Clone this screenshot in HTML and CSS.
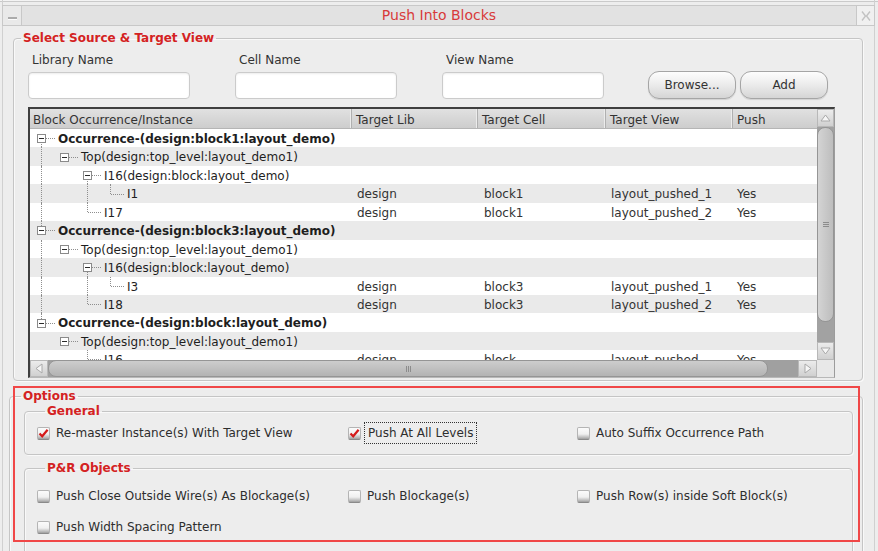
FILE: index.html
```html
<!DOCTYPE html>
<html>
<head>
<meta charset="utf-8">
<title>Push Into Blocks</title>
<link rel="stylesheet" href="styles.css">
</head>
<body>
<div class="window">
  <div class="titlebar">
    <div class="tb-btn tb-min"><span class="dash"></span></div>
    <div class="tb-title">Push Into Blocks</div>
    <div class="tb-btn tb-close">
      <svg width="12" height="12" viewBox="0 0 12 12"><path d="M2 1.5 L5.5 6 L2 10.5 M10 1.5 L6.5 6 L10 10.5" fill="none" stroke="#c2c2c2" stroke-width="1.4"/></svg>
    </div>
  </div>

  <fieldset class="group group-select">
    <legend>Select Source &amp; Target View</legend>
    <div class="fields">
      <div class="field"><label>Library Name</label><div class="input"></div></div>
      <div class="field"><label>Cell Name</label><div class="input"></div></div>
      <div class="field"><label>View Name</label><div class="input"></div></div>
      <button class="btn">Browse...</button>
      <button class="btn">Add</button>
    </div>

    <div class="table">
      <div class="view">
        <div class="thead">
          <div class="hc w1">Block Occurrence/Instance</div>
          <div class="hc w2">Target Lib</div>
          <div class="hc w3">Target Cell</div>
          <div class="hc w4">Target View</div>
          <div class="hc w5 last-h">Push</div>
        </div>
        <div class="tbody">
          <div class="row">
            <div class="c w1 tree"><span class="g box dn"><i></i></span><span class="t b">Occurrence-(design:block1:layout_demo)</span></div>
            <div class="c w2"></div><div class="c w3"></div><div class="c w4"></div><div class="c w5"></div>
          </div>
          <div class="row">
            <div class="c w1 tree"><span class="g pass"></span><span class="g box"><i></i></span><span class="t">Top(design:top_level:layout_demo1)</span></div>
            <div class="c w2"></div><div class="c w3"></div><div class="c w4"></div><div class="c w5"></div>
          </div>
          <div class="row">
            <div class="c w1 tree"><span class="g pass"></span><span class="g"></span><span class="g box dn"><i></i></span><span class="t">I16(design:block:layout_demo)</span></div>
            <div class="c w2"></div><div class="c w3"></div><div class="c w4"></div><div class="c w5"></div>
          </div>
          <div class="row">
            <div class="c w1 tree"><span class="g pass"></span><span class="g"></span><span class="g pass"></span><span class="g last"></span><span class="t">I1</span></div>
            <div class="c w2">design</div><div class="c w3">block1</div><div class="c w4">layout_pushed_1</div><div class="c w5">Yes</div>
          </div>
          <div class="row">
            <div class="c w1 tree"><span class="g pass"></span><span class="g"></span><span class="g last"></span><span class="t">I17</span></div>
            <div class="c w2">design</div><div class="c w3">block1</div><div class="c w4">layout_pushed_2</div><div class="c w5">Yes</div>
          </div>
          <div class="row">
            <div class="c w1 tree"><span class="g box up dn"><i></i></span><span class="t b">Occurrence-(design:block3:layout_demo)</span></div>
            <div class="c w2"></div><div class="c w3"></div><div class="c w4"></div><div class="c w5"></div>
          </div>
          <div class="row">
            <div class="c w1 tree"><span class="g pass"></span><span class="g box"><i></i></span><span class="t">Top(design:top_level:layout_demo1)</span></div>
            <div class="c w2"></div><div class="c w3"></div><div class="c w4"></div><div class="c w5"></div>
          </div>
          <div class="row">
            <div class="c w1 tree"><span class="g pass"></span><span class="g"></span><span class="g box dn"><i></i></span><span class="t">I16(design:block:layout_demo)</span></div>
            <div class="c w2"></div><div class="c w3"></div><div class="c w4"></div><div class="c w5"></div>
          </div>
          <div class="row">
            <div class="c w1 tree"><span class="g pass"></span><span class="g"></span><span class="g pass"></span><span class="g last"></span><span class="t">I3</span></div>
            <div class="c w2">design</div><div class="c w3">block3</div><div class="c w4">layout_pushed_1</div><div class="c w5">Yes</div>
          </div>
          <div class="row">
            <div class="c w1 tree"><span class="g pass"></span><span class="g"></span><span class="g last"></span><span class="t">I18</span></div>
            <div class="c w2">design</div><div class="c w3">block3</div><div class="c w4">layout_pushed_2</div><div class="c w5">Yes</div>
          </div>
          <div class="row">
            <div class="c w1 tree"><span class="g box up"><i></i></span><span class="t b">Occurrence-(design:block:layout_demo)</span></div>
            <div class="c w2"></div><div class="c w3"></div><div class="c w4"></div><div class="c w5"></div>
          </div>
          <div class="row">
            <div class="c w1 tree"><span class="g"></span><span class="g box"><i></i></span><span class="t">Top(design:top_level:layout_demo1)</span></div>
            <div class="c w2"></div><div class="c w3"></div><div class="c w4"></div><div class="c w5"></div>
          </div>
          <div class="row">
            <div class="c w1 tree"><span class="g"></span><span class="g"></span><span class="g last"></span><span class="t">I16</span></div>
            <div class="c w2">design</div><div class="c w3">block</div><div class="c w4">layout_pushed</div><div class="c w5">Yes</div>
          </div>
        </div>
      </div>

      <div class="vscroll">
        <div class="sb-btn">
          <svg width="11" height="8" viewBox="0 0 11 8"><path d="M1 7 L5.5 1 L10 7 Z" fill="#f6f6f6" stroke="#a9a9a9"/></svg>
        </div>
        <div class="vtrack">
          <div class="vthumb"><span class="grip-v"></span></div>
        </div>
        <div class="sb-btn">
          <svg width="11" height="8" viewBox="0 0 11 8"><path d="M1 1 L5.5 7 L10 1 Z" fill="#f6f6f6" stroke="#a9a9a9"/></svg>
        </div>
      </div>

      <div class="hscroll">
        <div class="sb-btn hb-left">
          <svg width="8" height="11" viewBox="0 0 8 11"><path d="M7 1 L1 5.5 L7 10 Z" fill="#f6f6f6" stroke="#a9a9a9"/></svg>
        </div>
        <div class="htrack">
          <div class="hthumb"><span class="grip-h"></span></div>
        </div>
        <div class="sb-btn hb-right">
          <svg width="8" height="11" viewBox="0 0 8 11"><path d="M1 1 L7 5.5 L1 10 Z" fill="#f6f6f6" stroke="#a9a9a9"/></svg>
        </div>
      </div>
      <div class="corner"></div>
    </div>
  </fieldset>

  <fieldset class="group group-options">
    <legend>Options</legend>
    <fieldset class="group sub sub-general">
      <legend>General</legend>
      <div class="checks">
        <div class="check"><span class="cb on"><svg width="11" height="11" viewBox="0 0 11 11"><path d="M1.5 5.5 L4.2 8.3 L9.6 1.8" fill="none" stroke="#d41a1a" stroke-width="2.2"/></svg></span><span class="lbl">Re-master Instance(s) With Target View</span></div>
        <div class="check"><span class="cb on"><svg width="11" height="11" viewBox="0 0 11 11"><path d="M1.5 5.5 L4.2 8.3 L9.6 1.8" fill="none" stroke="#d41a1a" stroke-width="2.2"/></svg></span><span class="lbl focus">Push At All Levels</span></div>
        <div class="check"><span class="cb"></span><span class="lbl">Auto Suffix Occurrence Path</span></div>
      </div>
    </fieldset>
    <fieldset class="group sub sub-pr">
      <legend>P&amp;R Objects</legend>
      <div class="checks">
        <div class="check"><span class="cb"></span><span class="lbl">Push Close Outside Wire(s) As Blockage(s)</span></div>
        <div class="check"><span class="cb"></span><span class="lbl">Push Blockage(s)</span></div>
        <div class="check"><span class="cb"></span><span class="lbl">Push Row(s) inside Soft Block(s)</span></div>
        <div class="check"><span class="cb"></span><span class="lbl">Push Width Spacing Pattern</span></div>
      </div>
    </fieldset>
  </fieldset>

  <div class="highlight"></div>
</div>
</body>
</html>
```

FILE: styles.css
```css
* { box-sizing: border-box; }
html, body { margin: 0; padding: 0; }
body {
  width: 878px;
  height: 551px;
  overflow: hidden;
  background: #ededed;
  font-family: "DejaVu Sans", Verdana, sans-serif;
  font-size: 12px;
  color: #333;
}

.window {
  position: relative;
  width: 878px;
  height: 551px;
  overflow: hidden;
  padding-top: 5px;
  background:
    linear-gradient(to right, transparent 2px, #d0d0d0 2px 3px, transparent 3px 874px, #d0d0d0 874px 875px, transparent 875px),
    linear-gradient(#f3f3f3 0 1px, #cacaca 1px 2px, #ededed 2px);
}

/* title bar */
.titlebar {
  display: grid;
  grid-template-columns: 20px 1fr 19px;
  height: 21px;
  margin: 0 3px 0 2px;
}
.tb-btn {
  position: relative;
  border: 1px solid #c8c8c8;
  background: #e9e9e9;
}
.tb-min .dash {
  position: absolute;
  left: 5px;
  top: 11px;
  width: 9px;
  height: 2px;
  background: #ababab;
  box-shadow: 0 1px 0 #fbfbfb;
}
.tb-close {
  display: flex;
  align-items: center;
  justify-content: center;
  background: #f0f0f0;
}
.tb-title {
  border-top: 1px solid #c8c8c8;
  border-bottom: 1px solid #c8c8c8;
  background: #e2e2e2;
  text-align: center;
  color: #d83a3a;
  font-size: 14px;
  line-height: 19px;
}

/* group boxes */
fieldset.group {
  margin: 0;
  padding: 0;
  min-width: 0;
  border: 1px solid #c5c5c5;
  border-radius: 4px;
  box-shadow: inset 1px 1px 0 #f9f9f9, 1px 1px 0 #f9f9f9;
}
fieldset.group > legend {
  padding: 0 2px;
  font-weight: bold;
  font-size: 12px;
  line-height: 14px;
  color: #d42222;
}
.group-select {
  width: 850px;
  margin: 5px 0 0 13px !important;
  padding: 0 0 2px 0 !important;
}
.group-select > legend { margin-left: 7px; }

.fields {
  display: flex;
  align-items: flex-end;
  padding: 8px 0 0 14px;
}
.field { width: 162px; margin-right: 45px; }
.field:nth-child(3) { margin-right: 44px; }
.field label {
  display: block;
  margin: 0 0 5px 4px;
  line-height: 14px;
  color: #333;
}
.input {
  height: 27px;
  background: #fff;
  border: 1px solid #cbcbcb;
  border-radius: 4px;
  box-shadow: inset 0 1px 2px rgba(0,0,0,0.08);
}
.btn {
  width: 88px;
  height: 28px;
  padding: 0;
  border: 1px solid #a5a5a5;
  border-radius: 11px;
  background: linear-gradient(#fdfdfd, #ededed 45%, #d5d5d5);
  box-shadow: 0 1px 1px rgba(0,0,0,0.12);
  font-family: "DejaVu Sans", Verdana, sans-serif;
  font-size: 12px;
  color: #333;
}
.btn + .btn { margin-left: 4px; }

/* table */
.table {
  margin: 8px 0 0 14px;
  width: 807px;
  height: 271px;
  display: grid;
  grid-template-columns: 787px 17px;
  grid-template-rows: 251px 17px;
  border-top: 2px solid #3f3f3f;
  border-left: 2px solid #3f3f3f;
  border-right: 1px solid #9c9c9c;
  border-bottom: 1px solid #b8b8b8;
  background: #fff;
}
.view {
  grid-row: 1;
  grid-column: 1;
  overflow: hidden;
}
.thead {
  display: flex;
  height: 20px;
  background: linear-gradient(#e1e1e1, #cdcdcd);
  border-bottom: 1px solid #b5b5b5;
}
.hc {
  flex: none;
  line-height: 17px;
  padding: 3px 0 0 4px;
  border-right: 1px solid #b0b0b0;
  box-shadow: inset -1px 0 0 #ececec;
  color: #333;
  white-space: nowrap;
  overflow: hidden;
}
.hc.w1 { padding-left: 3px; }
.hc.last-h { border-right: none; box-shadow: none; }
.w1 { width: 322px; }
.w2 { width: 126px; }
.w3 { width: 128px; }
.w4 { width: 127px; }
.w5 { width: 84px; }

.row {
  display: flex;
  height: 18.45px;
  line-height: 20px;
  white-space: nowrap;
  background: #fff;
}
.row:nth-child(even) { background: #eaeaea; }
.c { flex: none; overflow: hidden; color: #333; }
.c.w2 { padding-left: 5px; }
.c.w3 { padding-left: 6px; }
.c.w4 { padding-left: 5px; }
.c.w5 { padding-left: 4px; }

.tree { display: flex; align-items: stretch; }
.g {
  flex: none;
  position: relative;
  width: 23px;
}
.g.pass::before {
  content: "";
  position: absolute;
  left: 11px;
  top: 0;
  bottom: 0;
  border-left: 1px dotted #8e8e8e;
}
.g.last::before {
  content: "";
  position: absolute;
  left: 11px;
  top: 0;
  height: 50%;
  border-left: 1px dotted #8e8e8e;
}
.g.last::after,
.g.box::after {
  content: "";
  position: absolute;
  left: 12px;
  right: -2px;
  top: 50%;
  border-top: 1px dotted #8e8e8e;
}
.g.box::after { left: 16px; }
.g.box.up::before,
.g.box.dn::before {
  content: "";
  position: absolute;
  left: 11px;
  border-left: 1px dotted #8e8e8e;
}
.g.box.up::before { top: 0; height: 50%; }
.g.box.dn::before { top: 50%; bottom: 0; }
.g.box.up.dn::before { top: 0; bottom: 0; }
.g.box i {
  position: absolute;
  z-index: 1;
  left: 7px;
  top: calc(50% - 4px);
  width: 9px;
  height: 9px;
  border: 1px solid #8a8a8a;
  background: #fff;
}
.g.box i::before {
  content: "";
  position: absolute;
  left: 1px;
  right: 1px;
  top: 3px;
  height: 1px;
  background: #2a2a2a;
}
.t { margin-left: 5px; color: #1e1e1e; }
.t.b { font-weight: bold; }

/* scrollbars */
.vscroll {
  grid-row: 1;
  grid-column: 2;
  display: flex;
  flex-direction: column;
  background: #a2a2a2;
}
.sb-btn {
  flex: none;
  display: flex;
  align-items: center;
  justify-content: center;
  background: linear-gradient(#ececec, #d0d0d0);
  border: 1px solid #b8b8b8;
}
.vscroll .sb-btn { height: 18px; }
.vtrack {
  flex: 1;
  display: flex;
  flex-direction: column;
}
.vthumb {
  height: 195px;
  border: 1px solid #959595;
  border-radius: 8px;
  background: linear-gradient(to right, #d4d4d4, #bdbdbd);
  display: flex;
  align-items: center;
  justify-content: center;
}
.grip-v {
  width: 6px;
  height: 5px;
  border-top: 1px solid #8c8c8c;
  border-bottom: 1px solid #8c8c8c;
  background: linear-gradient(transparent 1px, #8c8c8c 1px 2px, transparent 2px);
}
.hscroll {
  grid-row: 2;
  grid-column: 1;
  display: flex;
  background: #a0a0a0;
}
.hb-left { width: 18px; }
.hb-right { width: 19px; }
.htrack { flex: 1; display: flex; }
.hthumb {
  width: 720px;
  border: 1px solid #959595;
  border-radius: 8px;
  background: linear-gradient(#cdcdcd, #b3b3b3);
  display: flex;
  align-items: center;
  justify-content: center;
}
.grip-h {
  width: 5px;
  height: 6px;
  border-left: 1px solid #8c8c8c;
  border-right: 1px solid #8c8c8c;
  background: linear-gradient(to right, transparent 1px, #8c8c8c 1px 2px, transparent 2px);
}
.corner {
  grid-row: 2;
  grid-column: 2;
  background: #e8e8e8;
}

/* options */
.group-options {
  width: 854px;
  margin: 8px 0 0 9px !important;
  padding: 1px 0 30px 0 !important;
}
.group-options > legend { margin-left: 11px; }
.sub { margin: 0 9px 0 14px !important; }
.sub > legend { margin-left: 8px; }
.sub-general { padding: 5px 0 11px 12px !important; }
.sub-pr { margin-top: 6px !important; padding: 11px 0 20px 12px !important; }

.checks {
  display: grid;
  grid-template-columns: 311px 229px auto;
  row-gap: 11px;
}
.check {
  display: flex;
  align-items: center;
  height: 20px;
  white-space: nowrap;
  color: #2e2e2e;
}
.cb {
  flex: none;
  width: 13px;
  height: 13px;
  border: 1px solid #b4b4b4;
  border-bottom-color: #8a8a8a;
  border-radius: 2px;
  background: linear-gradient(#fbfbfb, #f0f0f0 55%, #bdbdbd 85%, #9e9e9e);
  display: flex;
  align-items: center;
  justify-content: center;
}
.lbl { margin-left: 6px; }
.lbl.focus {
  margin-left: 3px;
  padding: 0 3px;
  height: 22px;
  line-height: 20px;
  border: 1px dotted #333;
}

/* annotation overlay */
.highlight {
  position: absolute;
  left: 13px;
  top: 386px;
  width: 847px;
  height: 156px;
  border: 2px solid #f04747;
  pointer-events: none;
}
```
